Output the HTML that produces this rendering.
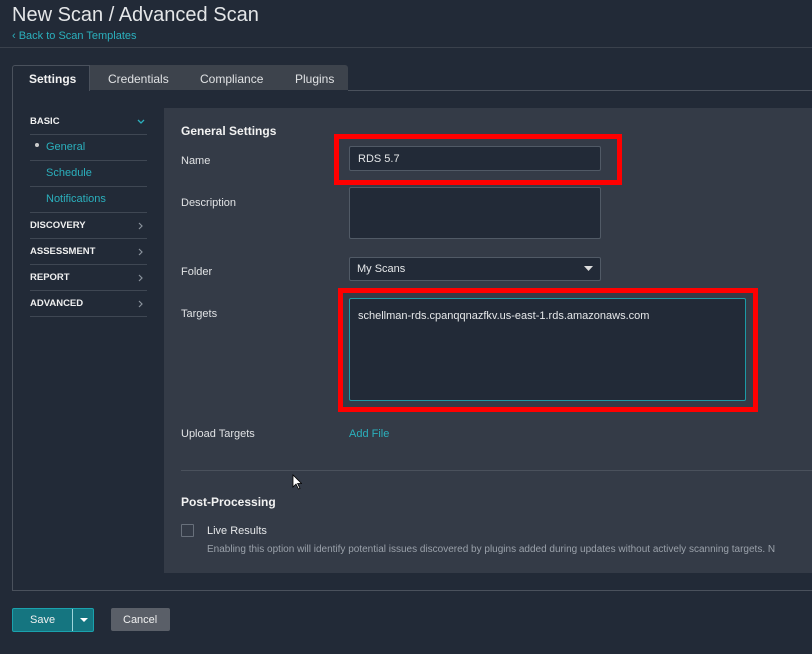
<!DOCTYPE html>
<html><head><meta charset="utf-8"><style>
*{margin:0;padding:0;box-sizing:border-box}
body{width:812px;height:654px;background:#222a37;font-family:"Liberation Sans",sans-serif;color:#e6e8ea;position:relative;overflow:hidden;font-size:11px}
.a{position:absolute;white-space:nowrap}
.t{color:#2bb0bd}
.sh{font-weight:bold;font-size:9.5px;color:#f0f0f0}
.ln{position:absolute;height:1px;background:#3f4753}
.inp{position:absolute;background:#222a37;border:1px solid #515a66;border-radius:2px}
.red{position:absolute;border:5px solid #f00}
.lab{position:absolute;font-size:11px;color:#e0e2e4}
.chev{position:absolute}
</style></head><body>
<div class="a" style="left:12px;top:4px;font-size:20px;color:#e4e6e8">New Scan / Advanced Scan</div>
<div class="a t" style="left:12px;top:30px;font-size:11px">‹ Back to Scan Templates</div>
<div class="ln" style="left:0;top:47px;width:812px;background:#3a414c"></div>

<div class="a" style="left:90px;top:65px;width:258px;height:25px;background:#3d434c;border-radius:0 3px 0 0"></div>
<div class="a" style="left:12px;top:65px;width:78px;height:26px;background:#222a37;border:1px solid #4a515c;border-bottom:none;border-radius:3px 0 0 0"></div>
<div class="a" style="left:29px;top:72px;font-size:12px;font-weight:bold;color:#f2f2f2">Settings</div>
<div class="a" style="left:108px;top:72px;font-size:12px;color:#e0e2e4">Credentials</div>
<div class="a" style="left:200px;top:72px;font-size:12px;color:#e0e2e4">Compliance</div>
<div class="a" style="left:295px;top:72px;font-size:12px;color:#e0e2e4">Plugins</div>
<div class="a" style="left:12px;top:90px;width:1px;height:500px;background:#4a515c"></div>
<div class="ln" style="left:348px;top:90px;width:464px;background:#4a515c"></div>
<div class="ln" style="left:12px;top:590px;width:800px;background:#4a515c"></div>

<div class="a sh" style="left:30px;top:116px">BASIC</div>
<svg class="chev" style="left:137px;top:119px" width="8" height="6"><path d="M1 1L4 4L7 1" stroke="#2bb0bd" stroke-width="1.3" fill="none"/></svg>
<div class="ln" style="left:30px;top:134px;width:117px"></div>
<div class="a" style="left:35px;top:143px;width:4px;height:4px;border-radius:50%;background:#ccc"></div>
<div class="a t" style="left:46px;top:141px">General</div>
<div class="ln" style="left:30px;top:160px;width:117px"></div>
<div class="a t" style="left:46px;top:167px">Schedule</div>
<div class="ln" style="left:30px;top:186px;width:117px"></div>
<div class="a t" style="left:46px;top:193px">Notifications</div>
<div class="ln" style="left:30px;top:212px;width:117px"></div>
<div class="a sh" style="left:30px;top:220px">DISCOVERY</div>
<svg class="chev" style="left:138px;top:222px" width="6" height="8"><path d="M1 1L4 4L1 7" stroke="#8a929c" stroke-width="1.2" fill="none"/></svg>
<div class="ln" style="left:30px;top:238px;width:117px"></div>
<div class="a sh" style="left:30px;top:246px">ASSESSMENT</div>
<svg class="chev" style="left:138px;top:248px" width="6" height="8"><path d="M1 1L4 4L1 7" stroke="#8a929c" stroke-width="1.2" fill="none"/></svg>
<div class="ln" style="left:30px;top:264px;width:117px"></div>
<div class="a sh" style="left:30px;top:272px">REPORT</div>
<svg class="chev" style="left:138px;top:274px" width="6" height="8"><path d="M1 1L4 4L1 7" stroke="#8a929c" stroke-width="1.2" fill="none"/></svg>
<div class="ln" style="left:30px;top:290px;width:117px"></div>
<div class="a sh" style="left:30px;top:298px">ADVANCED</div>
<svg class="chev" style="left:138px;top:300px" width="6" height="8"><path d="M1 1L4 4L1 7" stroke="#8a929c" stroke-width="1.2" fill="none"/></svg>
<div class="ln" style="left:30px;top:316px;width:117px"></div>

<div class="a" style="left:164px;top:108px;width:648px;height:465px;background:#343b47"></div>
<div class="a" style="left:181px;top:124px;font-size:12px;font-weight:bold;color:#f2f2f2">General Settings</div>
<div class="lab" style="left:181px;top:155px">Name</div>
<div class="red" style="left:334px;top:134px;width:288px;height:51px"></div>
<div class="inp" style="left:349px;top:146px;width:252px;height:25px"></div>
<div class="a" style="left:358px;top:153px;font-size:11px">RDS 5.7</div>
<div class="lab" style="left:181px;top:197px">Description</div>
<div class="inp" style="left:349px;top:187px;width:252px;height:52px"></div>
<div class="lab" style="left:181px;top:266px">Folder</div>
<div class="inp" style="left:349px;top:257px;width:252px;height:24px"></div>
<div class="a" style="left:357px;top:263px">My Scans</div>
<svg class="a" style="left:584px;top:266px" width="9" height="5"><path d="M0 0H9L4.5 5Z" fill="#ddd"/></svg>
<div class="lab" style="left:181px;top:308px">Targets</div>
<div class="red" style="left:338px;top:288px;width:420px;height:124px"></div>
<div class="inp" style="left:349px;top:298px;width:397px;height:103px;border-color:#1c9aa5"></div>
<div class="a" style="left:358px;top:310px">schellman-rds.cpanqqnazfkv.us-east-1.rds.amazonaws.com</div>
<div class="lab" style="left:181px;top:428px">Upload Targets</div>
<div class="a t" style="left:349px;top:428px">Add File</div>
<div class="ln" style="left:181px;top:470px;width:631px;background:#4a515c"></div>
<div class="a" style="left:181px;top:495px;font-size:12px;font-weight:bold;color:#f2f2f2">Post-Processing</div>
<div class="a" style="left:181px;top:524px;width:13px;height:13px;border:1px solid #68707b;border-radius:1px"></div>
<div class="a" style="left:207px;top:525px">Live Results</div>
<div class="a" style="left:207px;top:544px;font-size:10px;color:#9aa1aa">Enabling this option will identify potential issues discovered by plugins added during updates without actively scanning targets. N</div>
<svg class="a" style="left:292px;top:474px" width="10" height="16"><path d="M1 1V13L4 10L6.5 15L8 14.3L5.6 9.5H9.5Z" fill="#fff" stroke="#000" stroke-width="0.8"/></svg>

<div class="a" style="left:12px;top:608px;width:82px;height:24px;background:#157580;border:1px solid #1aa2ad;border-radius:2px"></div>
<div class="a" style="left:72px;top:609px;width:1px;height:22px;background:#9fd6db"></div>
<div class="a" style="left:30px;top:614px;font-size:11px;color:#f0f0f0">Save</div>
<svg class="a" style="left:80px;top:618px" width="8" height="4"><path d="M0 0H8L4 4Z" fill="#fff"/></svg>
<div class="a" style="left:111px;top:608px;width:59px;height:23px;background:#5a5f68;border-radius:2px"></div>
<div class="a" style="left:123px;top:614px;font-size:11px;color:#f0f0f0">Cancel</div>
</body></html>
